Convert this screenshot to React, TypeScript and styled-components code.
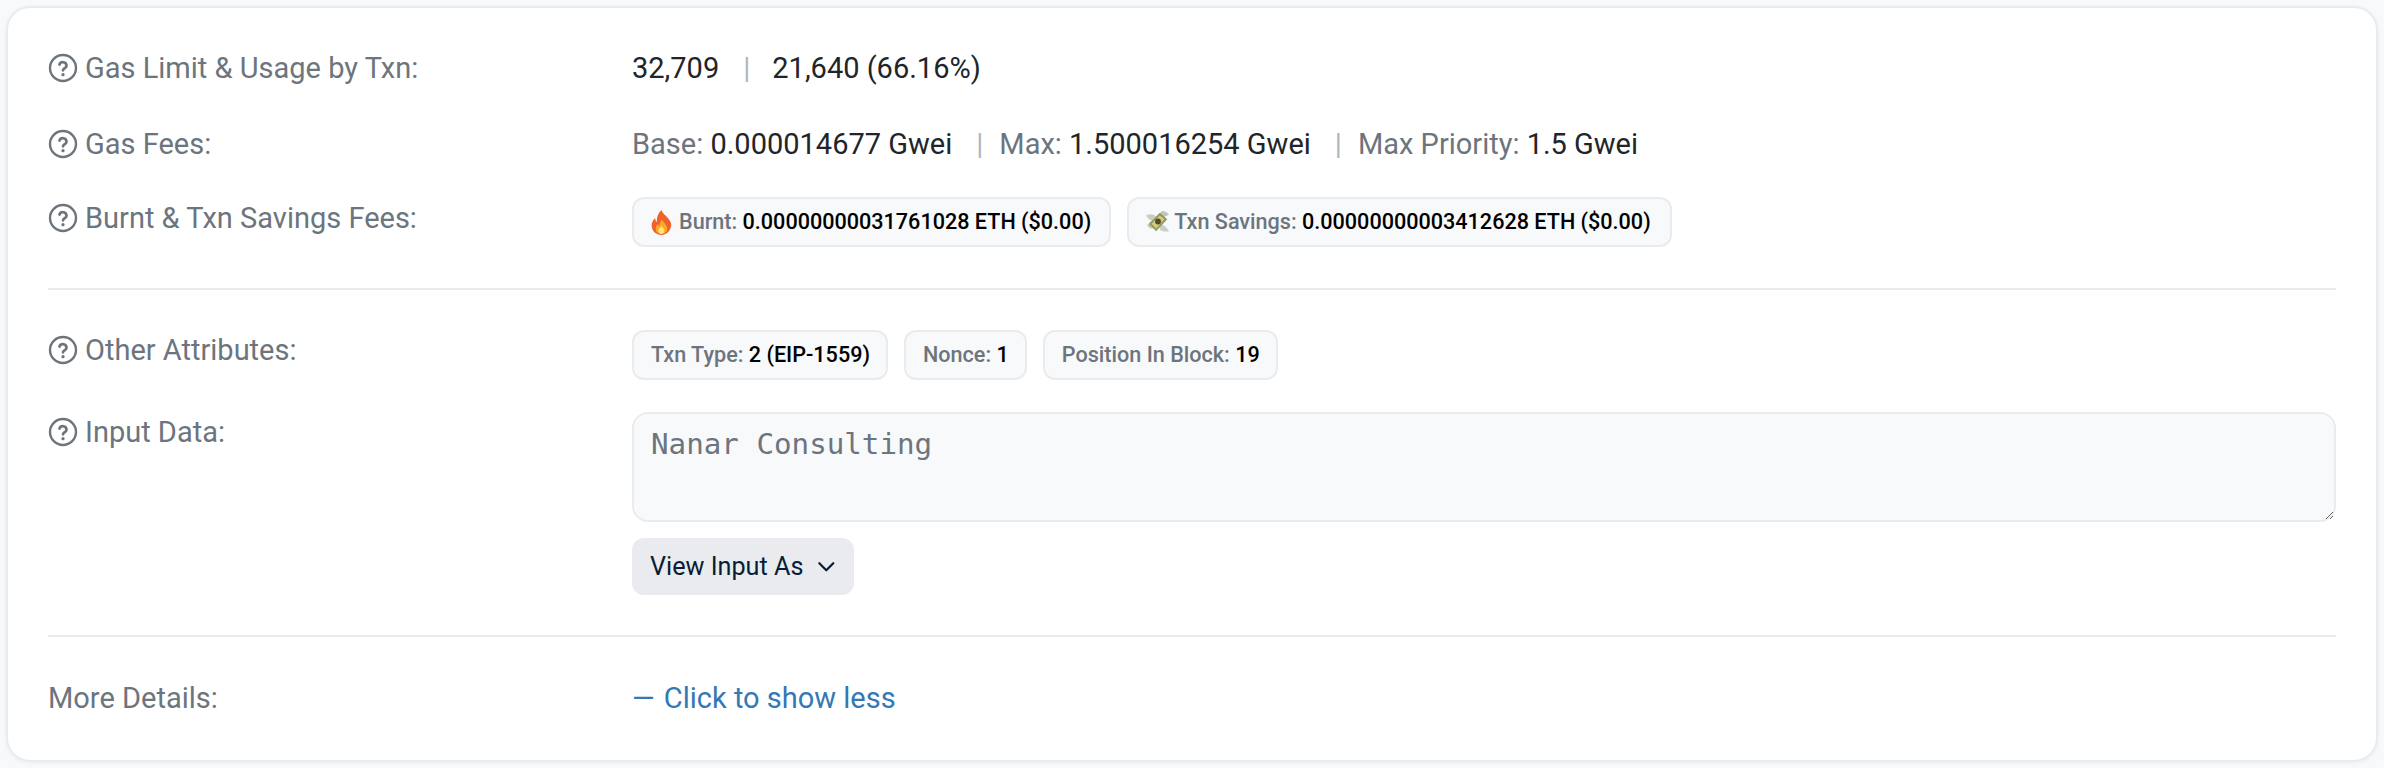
import React from "react";
import styled, { createGlobalStyle } from "styled-components";

const Global = createGlobalStyle`
  html, body { margin: 0; padding: 0; background: #f8f9fa; }
  body { font-family: Roboto, "Liberation Sans", sans-serif; font-size: 29px; color: #081d35; }
`;
const Page = styled.div`
  padding: 6px;
  width: 2384px;
  box-sizing: border-box;
`;
const Card = styled.section`
  box-sizing: border-box;
  width: 2372px;
  height: 756px;
  background: #fff;
  border: 2px solid #e9ecef;
  border-radius: 24px;
  padding: 38px 40px 0;
  box-shadow: 0 1px 4px rgba(189, 197, 209, 0.2);
`;
const Row = styled.div<{ $gap?: number }>`
  display: flex;
  align-items: flex-start;
  margin-bottom: ${(p) => p.$gap ?? 31}px;
`;
const Label = styled.div`
  width: 584px;
  flex: none;
  display: flex;
  align-items: center;
  gap: 7px;
  color: #6c757d;
  line-height: 44px;
  height: 44px;
  white-space: pre;
`;
const Value = styled.div<{ $pt?: number }>`
  flex: 1;
  min-width: 0;
  line-height: 44px;
  padding-top: ${(p) => p.$pt ?? 0}px;
  color: #212529;
`;
const Muted = styled.span`
  color: #6c757d;
`;
const Sep = styled.span<{ $right?: number }>`
  color: #adb5bd;
  margin: 0 ${(p) => p.$right ?? 16}px 0 24px;
`;
const Pills = styled.div`
  display: flex;
  gap: 16px;
`;
const Pill = styled.div<{ $gap?: number; $right?: number }>`
  box-sizing: border-box;
  height: 50px;
  display: flex;
  align-items: center;
  gap: ${(p) => p.$gap ?? 6}px;
  padding: 0 ${(p) => p.$right ?? 16}px 0 17px;
  background: #f8f9fa;
  border: 2px solid #e9ecef;
  border-radius: 12px;
  font-size: 21.6px;
  font-weight: 500;
  line-height: 1;
  white-space: pre;
  color: #6c757d;
`;
const PillValue = styled.span`
  color: #000;
`;
const Divider = styled.hr<{ $top: number; $bottom: number }>`
  border: 0;
  height: 2px;
  background: #e9ecef;
  margin: ${(p) => p.$top}px 0 ${(p) => p.$bottom}px;
`;
const InputBox = styled.textarea`
  display: block;
  box-sizing: border-box;
  width: 100%;
  height: 110px;
  padding: 9px 17px;
  background: #f8f9fa;
  border: 2px solid #e9ecef;
  border-radius: 16px;
  font-family: "DejaVu Sans Mono", monospace;
  font-size: 29.2px;
  line-height: 1.5;
  color: #6c757d;
  outline: none;
`;
const ViewButton = styled.div`
  box-sizing: border-box;
  margin-top: 16px;
  width: 222px;
  height: 57px;
  display: flex;
  align-items: center;
  gap: 14px;
  padding: 0 18px;
  background: #e9ebef;
  border-radius: 12px;
  font-size: 25.2px;
  white-space: nowrap;
  color: #081d35;
`;
const ShowLess = styled.a`
  color: #3478b5;
  line-height: 44px;
  white-space: pre;
`;
const Dash = styled.span`
  margin-right: 2px;
`;

const Help = () => (
  <svg width="30" height="30" viewBox="0 0 24 24" fill="none" stroke="#6c757d" strokeWidth="1.9" strokeLinecap="round" strokeLinejoin="round">
    <circle cx="12" cy="12" r="10.4" />
    <path d="M9.2 9.2a2.9 2.9 0 0 1 5.6 1c0 1.9-2.8 2.3-2.8 3.6" strokeWidth="2.2" />
    <path d="M12 17.3h.01" strokeWidth="2.6" />
  </svg>
);

const Flame = () => (
  <svg width="21" height="25" viewBox="0 0 20 24">
    <path d="M10 0c1 4 7 7 9 12 1.5 5-2.5 12-9 12S-1 18 1 12c.7-2 2-3.400 3-4 0 2 .6 3 1.600 3.500C5 8 6.500 3 10 0z" fill="#f0622a" />
    <path d="M10.500 9c.5 2.500 5 5 5 9 0 3-2.500 5-5.500 5s-5.500-2-5.500-5c0-2 1-3.500 2-4.500.2 1 .7 1.500 1.500 1.800C8 13 9 11 10.500 9z" fill="#fba92c" />
    <path d="M10 15c.6 1.600 2.800 2.800 2.800 4.800 0 1.700-1.300 3-2.900 3s-2.900-1.300-2.900-3c0-1.900 2.200-3 3-4.800z" fill="#ffe27a" />
  </svg>
);
const Money = () => (
  <svg width="24" height="24" viewBox="1 0 26 24">
    <path d="M1 5c4-2 8-2 11 1L8 11C5 10 3 8 1 5zM16 15c4 0 7 2 10 7-5 1-8 0-10-2z" fill="#c9cfc4" />
    <path d="M18 0c3 0 6 1 8 4l-6 3-4-4zM2 15l6-2 3 5c-4 2-7 1-9-3z" fill="#bfc7b8" />
    <path d="M4 14 16 2l8 7-12 13z" fill="#8f9a62" />
    <path d="M7 14 16 5l5 4-9 10z" fill="#d9c97c" />
    <circle cx="14" cy="11.500" r="3.200" fill="#4f4f28" />
  </svg>
);
const Chevron = () => (
  <svg width="20" height="20" viewBox="0 0 20 20" fill="none" stroke="#081d35" strokeWidth="2.4" strokeLinecap="round" strokeLinejoin="round">
    <path d="M2.500 6l7.500 7.500L17.500 6" />
  </svg>
);

export default function App() {
  return (
    <Page>
      <Global />
      <Card>
        <Row $gap={32}>
          <Label><Help />Gas Limit &amp; Usage by Txn:</Label>
          <Value>32,709<Sep $right={22}>|</Sep>21,640 (66.16%)</Value>
        </Row>
        <Row $gap={30}>
          <Label><Help />Gas Fees:</Label>
          <Value>
            <Muted>Base: </Muted>0.000014677 Gwei<Sep>|</Sep>
            <Muted>Max: </Muted>1.500016254 Gwei<Sep>|</Sep>
            <Muted>Max Priority: </Muted>1.5 Gwei
          </Value>
        </Row>
        <Row $gap={0}>
          <Label><Help />Burnt &amp; Txn Savings Fees:</Label>
          <Value $pt={1}>
            <Pills>
              <Pill $right={18} $gap={7}><Flame /><span>Burnt: <PillValue>0.00000000031761028 ETH ($0.00)</PillValue></span></Pill>
              <Pill $right={19} $gap={4}><Money /><span>Txn Savings: <PillValue>0.00000000003412628 ETH ($0.00)</PillValue></span></Pill>
            </Pills>
          </Value>
        </Row>
        <Divider $top={41} $bottom={38} />
        <Row $gap={30}>
          <Label><Help />Other Attributes:</Label>
          <Value $pt={2}>
            <Pills>
              <Pill><span>Txn Type: <PillValue>2 (EIP-1559)</PillValue></span></Pill>
              <Pill><span>Nonce: <PillValue>1</PillValue></span></Pill>
              <Pill><span>Position In Block: <PillValue>19</PillValue></span></Pill>
            </Pills>
          </Value>
        </Row>
        <Row $gap={0}>
          <Label><Help />Input Data:</Label>
          <Value $pt={2}>
            <InputBox readOnly defaultValue="Nanar Consulting" />
            <ViewButton>View Input As<Chevron /></ViewButton>
          </Value>
        </Row>
        <Divider $top={40} $bottom={39} />
        <Row $gap={0}>
          <Label>More Details:</Label>
          <Value><ShowLess><Dash>— </Dash>Click to show less</ShowLess></Value>
        </Row>
      </Card>
    </Page>
  );
}
